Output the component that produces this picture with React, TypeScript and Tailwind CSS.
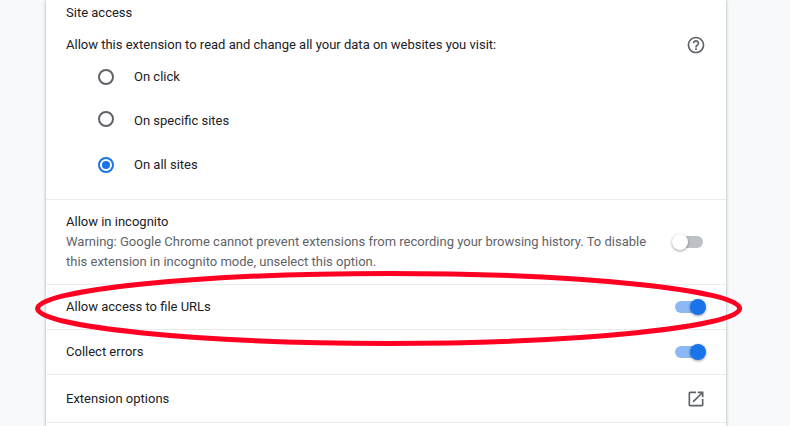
import type { ReactNode } from 'react';

function Radio({ checked = false }: { checked?: boolean }) {
  return (
    <span
      className={`flex size-4 shrink-0 items-center justify-center rounded-full border-2 ${
        checked ? 'border-[#1a73e8]' : 'border-[#5f6368]'
      }`}
    >
      {checked && <span className="size-2 rounded-full bg-[#1a73e8]" />}
    </span>
  );
}

function Option({ label, checked, className }: { label: string; checked?: boolean; className: string }) {
  return (
    <div className="flex h-5 items-start pl-8">
      <div className={className}>
        <Radio checked={checked} />
      </div>
      <span className="ml-5">{label}</span>
    </div>
  );
}

function Toggle({ on = false }: { on?: boolean }) {
  return (
    <span
      className={`mr-[3px] flex h-3 w-7 shrink-0 items-center rounded-full ${
        on ? 'justify-end bg-[#8cb9f4]' : 'bg-[#bdc1c6]'
      }`}
    >
      <span
        className={`size-4 shrink-0 rounded-full shadow-[0_1px_3px_0_rgba(0,0,0,0.4)] ${
          on ? '-mr-[3px] bg-[#1a73e8]' : '-ml-[3px] bg-white'
        }`}
      />
    </span>
  );
}

function Row({ className, children }: { className: string; children?: ReactNode }) {
  return (
    <div className={`flex items-center justify-between border-t border-[#ebebeb] px-5 ${className}`}>
      {children}
    </div>
  );
}

function Icon({ d }: { d: string }) {
  return (
    <svg viewBox="0 0 24 24" className="size-5 shrink-0 fill-[#5f6368]">
      <path d={d} />
    </svg>
  );
}

const HELP =
  'M11 18h2v-2h-2v2zm1-16C6.48 2 2 6.48 2 12s4.48 10 10 10 10-4.48 10-10S17.52 2 12 2zm0 18c-4.41 0-8-3.59-8-8s3.59-8 8-8 8 3.59 8 8-3.59 8-8 8zm0-14c-2.21 0-4 1.79-4 4h2c0-1.1.9-2 2-2s2 .9 2 2c0 2-3 1.75-3 5h2c0-2.25 3-2.5 3-5 0-2.21-1.79-4-4-4z';
const OPEN =
  'M19 19H5V5h7V3H5c-1.11 0-2 .9-2 2v14c0 1.1.89 2 2 2h14c1.1 0 2-.9 2-2v-7h-2v7zM14 3v2h3.59l-9.83 9.83 1.41 1.41L19 6.41V10h2V3h-7z';

export default function App() {
  return (
    <div className="relative flex h-[426px] w-[790px] overflow-hidden bg-[#f8f9fa] pl-[46px] font-['Roboto',sans-serif] text-[13px] leading-5 text-[#202124]">
      <main className="h-full w-[680px] bg-white shadow-[0_1px_2px_0_rgba(60,64,67,0.3),0_1px_3px_1px_rgba(60,64,67,0.15)]">
        <section className="h-[199px] px-5 pt-[3px]">
          <h2>Site access</h2>
          <div className="mt-3 flex h-5 items-center justify-between">
            <span>Allow this extension to read and change all your data on websites you visit:</span>
            <Icon d={HELP} />
          </div>
          <div className="mt-3 flex flex-col gap-6">
            <Option label="On click" className="mt-0.5" />
            <Option label="On specific sites" className="mt-0" />
            <Option label="On all sites" checked className="mt-0.5" />
          </div>
        </section>
        <Row className="h-[85px]">
          <div className="w-[590px]">
            <div>Allow in incognito</div>
            <div className="text-[#5f6368]">
              Warning: Google Chrome cannot prevent extensions from recording your browsing history. To disable this
              extension in incognito mode, unselect this option.
            </div>
          </div>
          <Toggle />
        </Row>
        <Row className="h-[45px]">
          <span>Allow access to file URLs</span>
          <Toggle on />
        </Row>
        <Row className="h-[45px]">
          <span>Collect errors</span>
          <Toggle on />
        </Row>
        <Row className="h-12">
          <span>Extension options</span>
          <Icon d={OPEN} />
        </Row>
        <Row className="h-12" />
      </main>
      <svg viewBox="0 0 790 426" className="pointer-events-none absolute inset-0 h-[426px] w-[790px]">
        <path
          d="M37.6 308.5C37.6 290.5 194.5 273.4 388.5 273.4S739.6 290.5 739.6 308.5 582.5 343.4 388.5 343.4 37.6 326.5 37.6 308.5Z"
          fill="none"
          stroke="#ff0022"
          strokeWidth="5"
        />
      </svg>
    </div>
  );
}
